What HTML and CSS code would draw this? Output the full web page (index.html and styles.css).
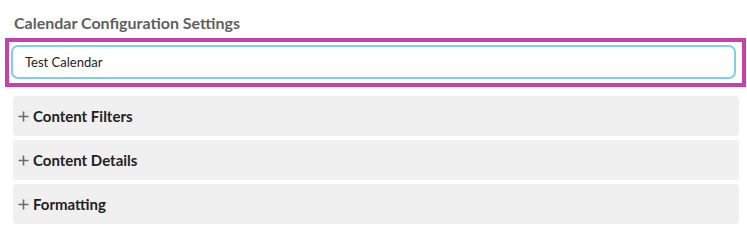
FILE: index.html
```html
<!DOCTYPE html>
<html>
<head>
<meta charset="utf-8">
<link rel="stylesheet" href="styles.css">
</head>
<body>
<div class="page">
  <h2 class="title">Calendar Configuration Settings</h2>
  <div class="focus-wrap">
    <input class="name-input" type="text" value="Test Calendar">
  </div>
  <div class="panels">
    <div class="panel"><svg class="plus" width="11" height="11" viewBox="0 0 11 11"><path d="M5.5 0.5V10.5M0.5 5.5H10.5"/></svg><span class="panel-label">Content Filters</span></div>
    <div class="panel"><svg class="plus" width="11" height="11" viewBox="0 0 11 11"><path d="M5.5 0.5V10.5M0.5 5.5H10.5"/></svg><span class="panel-label">Content Details</span></div>
    <div class="panel"><svg class="plus" width="11" height="11" viewBox="0 0 11 11"><path d="M5.5 0.5V10.5M0.5 5.5H10.5"/></svg><span class="panel-label">Formatting</span></div>
  </div>
</div>
</body>
</html>
```
FILE: styles.css
```css
html, body {
  margin: 0;
  padding: 0;
  background: #fff;
}
.page {
  font-family: Lato, "Liberation Sans", sans-serif;
  padding: 13px 8px 0 13px;
  width: 726px;
}
.title {
  margin: 0 0 5px 1px;
  font-size: 16px;
  line-height: 20px;
  font-weight: 700;
  color: #5f5f5f;
}
.focus-wrap {
  margin-left: -8px;
  width: 729px;
  border: 4px solid #c642a9;
  padding: 3px 2px 4px 2px;
  background: #fff;
}
.name-input {
  display: block;
  box-sizing: border-box;
  width: 725px;
  height: 34px;
  border: 2px solid #82cdec;
  border-radius: 7px;
  padding: 0 12px;
  font-family: Lato, "Liberation Sans", sans-serif;
  font-size: 13px;
  color: #222;
  background: #fff;
  outline: none;
}
.panels {
  margin-top: 9px;
  display: flex;
  flex-direction: column;
  gap: 4px;
}
.panel {
  height: 40px;
  background: #f0f0f0;
  border-radius: 4px;
  display: flex;
  align-items: center;
  padding-left: 5px;
  gap: 4px;
}
.plus {
  display: block;
  stroke: #6b6b6b;
  stroke-width: 1.6;
  fill: none;
}
.panel-label {
  font-size: 15px;
  font-weight: 700;
  color: #222;
}
```
